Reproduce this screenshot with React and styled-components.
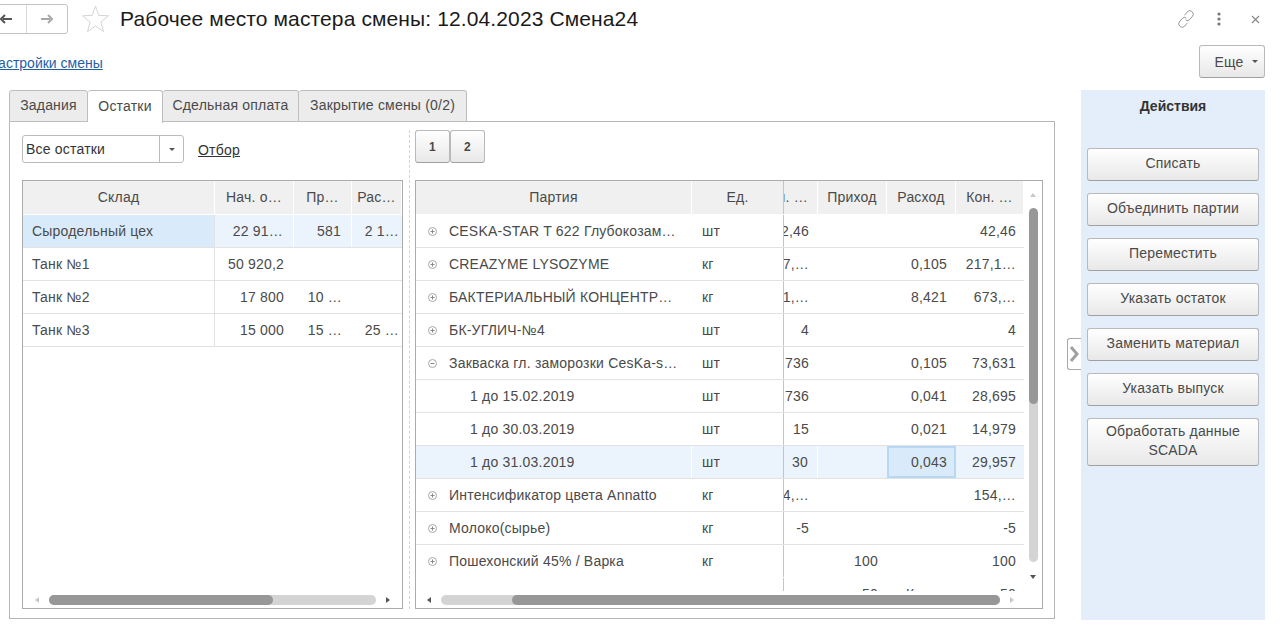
import React from 'react';
import styled, { createGlobalStyle, css } from 'styled-components';

const GlobalStyle = createGlobalStyle`
  html, body { margin: 0; padding: 0; background: #fff; overflow: hidden; }
  body { font-family: "Liberation Sans", Arial, sans-serif; font-size: 14px; letter-spacing: 0.2px; color: #4a4a4a; }
`;

const Page = styled.div`
  width: 1280px;
  height: 630px;
  overflow: hidden;
`;

const TopBar = styled.div`
  display: flex;
  align-items: center;
  height: 30px;
  padding: 4px 20px 0 0;
`;

const NavGroup = styled.div`
  display: flex;
  margin-left: -15px;
  height: 30px;
  border: 1px solid #c4c4c4;
  border-radius: 3px;
  box-sizing: border-box;
`;

const NavButton = styled.div`
  width: 40px;
  display: flex;
  align-items: center;
  justify-content: center;
  ${props => props.first && css`border-right: 1px solid #d8d8d8;`}
`;

const StarWrap = styled.div`
  margin-left: 14px;
  display: flex;
`;

const Title = styled.div`
  margin-left: 11px;
  font-size: 21px;
  letter-spacing: 0.12px;
  color: #1a1a1a;
  white-space: nowrap;
  flex: 1;
`;

const WindowIcons = styled.div`
  display: flex;
  align-items: center;
  color: #8a8a8a;
`;

const DotsIcon = styled.svg`
  margin: 0 30px 0 21px;
`;

const LinkRow = styled.div`
  display: flex;
  align-items: center;
  justify-content: space-between;
  height: 33px;
  margin-top: 11px;
  padding-right: 15px;
`;

const SettingsLink = styled.a`
  margin: 2px 0 0 -12px;
  letter-spacing: 0;
  color: #1f5fa6;
  text-decoration: underline;
`;

const Button = styled.div`
  box-sizing: border-box;
  display: flex;
  align-items: center;
  justify-content: center;
  text-align: center;
  border: 1px solid #b9b9b9;
  border-bottom-color: #a0a0a0;
  border-radius: 3px;
  background: linear-gradient(#ffffff, #e8e8e8);
  color: #4a4a4a;
`;

const MoreButton = styled(Button)`
  width: 66px;
  height: 33px;
  gap: 8px;
  padding-left: 8px;
`;

const Caret = styled.span`
  width: 0;
  height: 0;
  border-left: 3px solid transparent;
  border-right: 3px solid transparent;
  border-top: 3px solid #555;
`;

const Main = styled.div`
  display: flex;
  margin: 12px 0 0 9px;
  height: 530px;
`;

const TabsColumn = styled.div`
  width: 1046px;
  height: 529px;
  display: flex;
  flex-direction: column;
`;

const TabStrip = styled.div`
  display: flex;
  height: 32px;
  position: relative;
  z-index: 1;
`;

const Tab = styled.div`
  box-sizing: border-box;
  width: ${props => props.width}px;
  height: 32px;
  padding-bottom: 2px;
  display: flex;
  align-items: center;
  justify-content: center;
  background: #ececec;
  border: 1px solid #bdbdbd;
  border-left-width: ${props => (props.firstTab ? 1 : 0)}px;
  border-radius: 3px 3px 0 0;
  ${props => props.active && css`
    background: #fff;
    border-bottom: none;
    height: 33px;
    padding-bottom: 3px;
  `}
`;

const TabPanel = styled.div`
  box-sizing: border-box;
  flex: 1;
  display: flex;
  border: 1px solid #b5b5b5;
  margin-top: -1px;
  padding: 8px 11px 9px 12px;
`;

const Pane = styled.div`
  display: flex;
  flex-direction: column;
  gap: 17px;
  width: ${props => props.width}px;
`;

const PaneDivider = styled.div`
  width: 0;
  margin: 0 5px 0 6px;
  border-left: 1px dashed #d4d4d4;
`;

const PaneToolbar = styled.div`
  display: flex;
  align-items: flex-end;
  height: 33px;
`;

const Combo = styled.div`
  box-sizing: border-box;
  width: 162px;
  height: 28px;
  display: flex;
  border: 1px solid #bbb;
  border-radius: 3px;
`;

const ComboText = styled.div`
  flex: 1;
  padding-left: 3px;
  line-height: 27px;
  color: #333;
`;

const ComboArrow = styled.div`
  width: 23px;
  border-left: 1px solid #bbb;
  display: flex;
  align-items: center;
  justify-content: center;
`;

const FilterLink = styled.a`
  margin: 0 0 5px 14px;
  color: #333;
  text-decoration: underline;
`;

const PageButton = styled(Button)`
  width: ${props => props.width}px;
  height: 33px;
  font-size: 12px;
  font-weight: bold;
`;

const Table = styled.div`
  box-sizing: border-box;
  height: 429px;
  display: flex;
  flex-direction: column;
  border: 1px solid #ababab;
`;

const TableUpper = styled.div`
  display: flex;
  height: 410px;
`;

const GridArea = styled.div`
  flex: 1;
  min-width: 0;
  overflow: hidden;
`;

const Row = styled.div`
  display: grid;
  grid-template-columns: ${props => props.columns};
  height: 33px;
  box-sizing: border-box;
  border-bottom: 1px solid #e2e2e2;
  ${props => props.selected && css`background: #ebf4fc;`}
  ${props => props.open && css`border-bottom-color: transparent;`}
`;

const HeaderRow = styled(Row)`
  height: 34px;
  background: #f0f0f0;
  border-bottom: 1px solid #fff;
`;

const HeaderCell = styled.div`
  display: flex;
  align-items: center;
  justify-content: center;
  padding-bottom: 2px;
  overflow: hidden;
  white-space: nowrap;
  border-right: 1px solid #fff;
  ${props => props.locked && css`border-right: 1px solid #c4c4c4;`}
  ${props => props.clipRight && css`justify-content: flex-end; padding-right: 9px;`}
`;

const Cell = styled.div`
  display: flex;
  align-items: center;
  overflow: hidden;
  white-space: nowrap;
  padding: 0 ${props => props.padRight ?? 9}px 0 ${props => props.padLeft ?? 9}px;
  justify-content: ${props => (props.numeric ? 'flex-end' : 'flex-start')};
  ${props => props.divided && css`border-right: 1px solid #e2e2e2;`}
  ${props => props.locked && css`border-right: 1px solid #c4c4c4;`}
  ${props => props.flush && css`padding-left: 0;`}
  ${props => props.current && css`background: #d9ebfa;`}
  ${props => props.focused && css`
    background: #d9ebfa;
    box-shadow: inset 0 0 0 2px #b7d8f5;
  `}
  ${props => props.whiteEdge && css`border-right: 1px solid #fff;`}
`;

const VScroll = styled.div`
  width: 18px;
  display: flex;
  flex-direction: column;
  align-items: center;
  padding-top: 12px;
  box-sizing: border-box;
`;

const VTrack = styled.div`
  width: 9px;
  height: 354px;
  margin: 11px 0 13px;
  border-radius: 5px;
  background: #d4d4d4;
  overflow: hidden;
`;

const VThumb = styled.div`
  height: 196px;
  border-radius: 5px;
  background: #979797;
`;

const HScroll = styled.div`
  height: 17px;
  display: flex;
  align-items: center;
  box-sizing: border-box;
  padding: 0 ${props => props.endPad}px 0 ${props => props.startPad}px;
  gap: 10px;
`;

const HTrack = styled.div`
  flex: 1;
  height: 10px;
  border-radius: 5px;
  background: #d4d4d4;
  display: flex;
  padding-left: ${props => props.offset}px;
`;

const HThumb = styled.div`
  width: ${props => props.width}px;
  border-radius: 5px;
  background: #979797;
`;

const Arrow = styled.span`
  width: 0;
  height: 0;
  flex: none;
  ${props => props.dir === 'left' && css`
    border-top: 3px solid transparent;
    border-bottom: 3px solid transparent;
    border-right: 4px solid ${props.color};
  `}
  ${props => props.dir === 'right' && css`
    border-top: 3px solid transparent;
    border-bottom: 3px solid transparent;
    border-left: 4px solid ${props.color};
  `}
  ${props => props.dir === 'up' && css`
    border-left: 3px solid transparent;
    border-right: 3px solid transparent;
    border-bottom: 4px solid ${props.color};
  `}
  ${props => props.dir === 'down' && css`
    border-left: 3px solid transparent;
    border-right: 3px solid transparent;
    border-top: 4px solid ${props.color};
  `}
`;

const Gutter = styled.div`
  width: 26px;
  display: flex;
  align-items: center;
  justify-content: flex-end;
`;

const Handle = styled.div`
  box-sizing: border-box;
  width: 14px;
  height: 32px;
  margin-bottom: 2px;
  display: flex;
  align-items: center;
  border: 1px solid #a9a9a9;
  border-right: none;
  border-radius: 3px 0 0 3px;
`;

const ActionsPanel = styled.div`
  box-sizing: border-box;
  width: 184px;
  background: #e3eefa;
  padding: 8px 6px 0;
  display: flex;
  flex-direction: column;
`;

const ActionsTitle = styled.div`
  font-weight: bold;
  letter-spacing: 0;
  text-align: center;
  color: #333;
  line-height: 16px;
  margin-bottom: 34px;
`;

const ActionList = styled.div`
  display: flex;
  flex-direction: column;
  gap: 12px;
`;

const ActionButton = styled(Button)`
  min-height: 33px;
  padding: 3px 10px 5px;
  line-height: 19px;
`;

const LeftColumns = '192px 79px 58px 50px';
const RightColumns = '276px 92px 34px 69px 69px 68px';

const leftRows = [
  ['Сыродельный цех', '22 91…', '581', '2 1…'],
  ['Танк №1', '50 920,2', '', ''],
  ['Танк №2', '17 800', '10 …', ''],
  ['Танк №3', '15 000', '15 …', '25 …'],
];

const rightRows = [
  { tree: 'plus', name: 'CESKA-STAR T 622 Глубокозам…', unit: 'шт', start: '42,46', end: '42,46' },
  { tree: 'plus', name: 'CREAZYME LYSOZYME', unit: 'кг', start: '217,…', out: '0,105', end: '217,1…' },
  { tree: 'plus', name: 'БАКТЕРИАЛЬНЫЙ КОНЦЕНТР…', unit: 'кг', start: '681,…', out: '8,421', end: '673,…' },
  { tree: 'plus', name: 'БК-УГЛИЧ-№4', unit: 'шт', start: '4', end: '4' },
  { tree: 'minus', name: 'Закваска гл. заморозки CesKa-s…', unit: 'шт', start: '73,736', out: '0,105', end: '73,631' },
  { name: '1 до 15.02.2019', unit: 'шт', start: '28,736', out: '0,041', end: '28,695' },
  { name: '1 до 30.03.2019', unit: 'шт', start: '15', out: '0,021', end: '14,979' },
  { name: '1 до 31.03.2019', unit: 'шт', start: '30', out: '0,043', end: '29,957', selected: true },
  { tree: 'plus', name: 'Интенсификатор цвета Annatto', unit: 'кг', start: '154,…', end: '154,…' },
  { tree: 'plus', name: 'Молоко(сырье)', unit: 'кг', start: '-5', end: '-5' },
  { tree: 'plus', name: 'Пошехонский 45% / Варка', unit: 'кг', income: '100', end: '100', open: true },
  { income: '50', end: '50', partial: true },
];

const actions = ['Списать', 'Объединить партии', 'Переместить', 'Указать остаток', 'Заменить материал', 'Указать выпуск', 'Обработать данные SCADA'];

function TreeIcon({ kind }) {
  return (
    <svg width="9" height="9" viewBox="0 0 9 9" style={{ flex: 'none', marginRight: 12 }}>
      <circle cx="4.5" cy="4.5" r="4" fill="none" stroke="#a8a8a8" />
      <path d={kind === 'plus' ? 'M2.5 4.5h4M4.5 2.5v4' : 'M2.5 4.5h4'} stroke="#888" />
    </svg>
  );
}

function ArrowIcon({ back }) {
  return (
    <svg width="14" height="10" viewBox="0 0 14 10">
      {back
        ? <path d="M13 5H4M6 1L2 5l4 4" fill="none" stroke="#555" strokeWidth="2" />
        : <path d="M1 5h9M8 1l4 4-4 4" fill="none" stroke="#a8a8a8" strokeWidth="2" />}
    </svg>
  );
}

function LeftTable() {
  return (
    <Table>
      <TableUpper>
        <GridArea>
          <HeaderRow columns={LeftColumns}>
            <HeaderCell>Склад</HeaderCell>
            <HeaderCell>Нач. о…</HeaderCell>
            <HeaderCell>Пр…</HeaderCell>
            <HeaderCell>Рас…</HeaderCell>
          </HeaderRow>
          {leftRows.map((row, i) => (
            <Row key={row[0]} columns={LeftColumns} selected={i === 0}>
              <Cell divided current={i === 0}>{row[0]}</Cell>
              <Cell numeric whiteEdge={i === 0} padRight={10}>{row[1]}</Cell>
              <Cell numeric whiteEdge={i === 0} padRight={10}>{row[2]}</Cell>
              <Cell numeric padRight={3}>{row[3]}</Cell>
            </Row>
          ))}
        </GridArea>
      </TableUpper>
      <HScroll startPad={12} endPad={12}>
        <Arrow dir="left" color="#c8c8c8" />
        <HTrack offset={0}><HThumb width={224} /></HTrack>
        <Arrow dir="right" color="#555" />
      </HScroll>
    </Table>
  );
}

function RightTable() {
  return (
    <Table>
      <TableUpper>
        <GridArea>
          <HeaderRow columns={RightColumns}>
            <HeaderCell>Партия</HeaderCell>
            <HeaderCell locked>Ед.</HeaderCell>
            <HeaderCell clipRight>Нач. …</HeaderCell>
            <HeaderCell>Приход</HeaderCell>
            <HeaderCell>Расход</HeaderCell>
            <HeaderCell>Кон. …</HeaderCell>
          </HeaderRow>
          {rightRows.map((row, i) => (
            <Row key={i} columns={RightColumns} selected={row.selected} open={row.open}>
              {row.tree
                ? <Cell padLeft={12} whiteEdge={row.selected}><TreeIcon kind={row.tree} />{row.name}</Cell>
                : <Cell padLeft={54} whiteEdge={row.selected}>{row.name}</Cell>}
              <Cell locked padLeft={10}>{row.unit}</Cell>
              <Cell numeric flush whiteEdge={row.selected}>{row.start}</Cell>
              <Cell numeric>{row.income}</Cell>
              {row.partial
                ? <Cell padLeft={19}>К</Cell>
                : <Cell numeric focused={row.selected}>{row.out}</Cell>}
              <Cell numeric padRight={8}>{row.end}</Cell>
            </Row>
          ))}
        </GridArea>
        <VScroll>
          <Arrow dir="up" color="#c8c8c8" />
          <VTrack><VThumb /></VTrack>
          <Arrow dir="down" color="#555" />
        </VScroll>
      </TableUpper>
      <HScroll startPad={11} endPad={28}>
        <Arrow dir="left" color="#555" />
        <HTrack offset={71}><HThumb width={488} /></HTrack>
        <Arrow dir="right" color="#c8c8c8" />
      </HScroll>
    </Table>
  );
}

export default function App() {
  return (
    <Page>
      <GlobalStyle />
      <TopBar>
        <NavGroup>
          <NavButton first><ArrowIcon back /></NavButton>
          <NavButton><ArrowIcon /></NavButton>
        </NavGroup>
        <StarWrap>
          <svg width="27" height="28" viewBox="0 0 27 28">
            <path d="M13.5 1l3.3 9.4 9.7.4-7.6 6.2 2.6 9.6-8-5.6-8 5.6 2.6-9.6L.5 10.8l9.7-.4z" fill="#fff" stroke="#d4d4d4" />
          </svg>
        </StarWrap>
        <Title>Рабочее место мастера смены: 12.04.2023 Смена24</Title>
        <WindowIcons>
          <svg width="20" height="20" viewBox="0 0 20 20" fill="none" stroke="#8a8a8a" strokeWidth="0.9">
            <path d="M8.6 6.2l2.8-3.4a3 3 0 0 1 4.2-.4l.6.5a3 3 0 0 1 .4 4.2l-2.8 3.4a3 3 0 0 1-4.2.4" />
            <path d="M11.4 13.8l-2.8 3.4a3 3 0 0 1-4.2.4l-.6-.5a3 3 0 0 1-.4-4.2l2.8-3.4a3 3 0 0 1 4.2-.4" />
          </svg>
          <DotsIcon width="4" height="14" viewBox="0 0 4 14" fill="#777">
            <circle cx="2" cy="2" r="1.6" />
            <circle cx="2" cy="7" r="1.6" />
            <circle cx="2" cy="12" r="1.6" />
          </DotsIcon>
          <svg width="9" height="9" viewBox="0 0 9 9" stroke="#888" strokeWidth="1.2">
            <path d="M1 1l7 7M8 1L1 8" />
          </svg>
        </WindowIcons>
      </TopBar>
      <LinkRow>
        <SettingsLink>Настройки смены</SettingsLink>
        <MoreButton>Еще<Caret /></MoreButton>
      </LinkRow>
      <Main>
        <TabsColumn>
          <TabStrip>
            <Tab firstTab width={79}>Задания</Tab>
            <Tab active width={75}>Остатки</Tab>
            <Tab width={136}>Сдельная оплата</Tab>
            <Tab width={168}>Закрытие смены (0/2)</Tab>
          </TabStrip>
          <TabPanel>
            <Pane width={381}>
              <PaneToolbar>
                <Combo>
                  <ComboText>Все остатки</ComboText>
                  <ComboArrow><Caret /></ComboArrow>
                </Combo>
                <FilterLink>Отбор</FilterLink>
              </PaneToolbar>
              <LeftTable />
            </Pane>
            <PaneDivider />
            <Pane width={628}>
              <PaneToolbar>
                <PageButton width={35}>1</PageButton>
                <PageButton width={35}>2</PageButton>
              </PaneToolbar>
              <RightTable />
            </Pane>
          </TabPanel>
        </TabsColumn>
        <Gutter>
          <Handle>
            <svg width="12" height="20" viewBox="0 0 12 20" fill="none" stroke="#a0a0a0" strokeWidth="3">
              <path d="M3 3l6 7-6 7" />
            </svg>
          </Handle>
        </Gutter>
        <ActionsPanel>
          <ActionsTitle>Действия</ActionsTitle>
          <ActionList>
            {actions.map(name => <ActionButton key={name}>{name}</ActionButton>)}
          </ActionList>
        </ActionsPanel>
      </Main>
    </Page>
  );
}
